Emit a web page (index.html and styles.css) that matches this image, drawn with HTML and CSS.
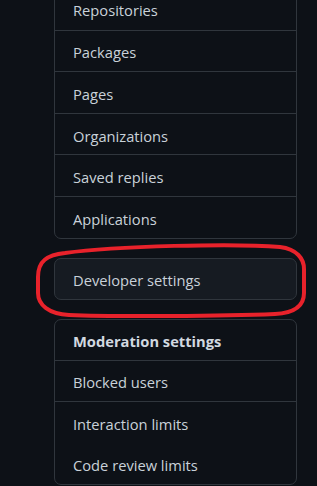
FILE: index.html
```html
<!DOCTYPE html>
<html lang="en">
<head>
    <meta charset="UTF-8">
    <meta name="viewport" content="width=device-width, initial-scale=1.0">
    <title>Settings</title>
    <link rel="stylesheet" href="styles.css">
</head>
<body>
    <div class="sidebar">
        <nav class="menu">
            <a class="menu-item" href="#">Repositories</a>
            <a class="menu-item" href="#">Packages</a>
            <a class="menu-item" href="#">Pages</a>
            <a class="menu-item" href="#">Organizations</a>
            <a class="menu-item" href="#">Saved replies</a>
            <a class="menu-item" href="#">Applications</a>
        </nav>

        <!-- highlighted with a hand-drawn red outline -->
        <div class="highlight">
            <nav class="menu menu-dev">
                <a class="menu-item" href="#">Developer settings</a>
            </nav>
            <svg class="outline" width="274" height="76" viewBox="0 0 274 76">
                <path d="M30 10 C 80 3, 200 0, 245 4 C 262 6, 269 16, 269 26 L 269 50 C 269 62, 260 70, 240 71 C 190 73, 80 74, 34 72 C 14 71, 3 62, 3 50 L 3 34 C 3 18, 12 12, 30 10 Z"
                      fill="none" stroke="#e8222b" stroke-width="4"/>
            </svg>
        </div>

        <nav class="menu">
            <div class="menu-heading">Moderation settings</div>
            <a class="menu-item" href="#">Blocked users</a>
            <a class="menu-item" href="#">Interaction limits</a>
            <a class="menu-item no-line" href="#">Code review limits</a>
        </nav>
    </div>
</body>
</html>
```

FILE: styles.css
```css
* {
    margin: 0;
    padding: 0;
    box-sizing: border-box;
}

body {
    font-family: "Open Sans", "Noto Sans", sans-serif;
    background-color: #0d1117;
    color: #c9d1d9;
    font-size: 14.7px;
}

.sidebar {
    width: 243px;
    margin: -13px 0 0 54px;
    display: flex;
    flex-direction: column;
    gap: 19px;
}

.menu {
    display: flex;
    flex-direction: column;
    border: 1px solid #30363d;
    border-radius: 7px;
}

.menu-item,
.menu-heading {
    display: flex;
    align-items: center;
    height: 41.6px;
    padding: 3px 18px 0;
    color: #c9d1d9;
    text-decoration: none;
    border-top: 1px solid #30363d;
}

.menu > :first-child {
    border-top: none;
}

.menu-heading {
    height: 40px;
    font-weight: 700;
    color: #d2d9e0;
}

.menu-item.no-line {
    border-top: none;
}

.highlight {
    position: relative;
}

.menu-dev {
    background: #161b22;
}

.menu-dev .menu-item {
    height: 40px;
}

.outline {
    position: absolute;
    left: -19px;
    top: -15px;
}
```
